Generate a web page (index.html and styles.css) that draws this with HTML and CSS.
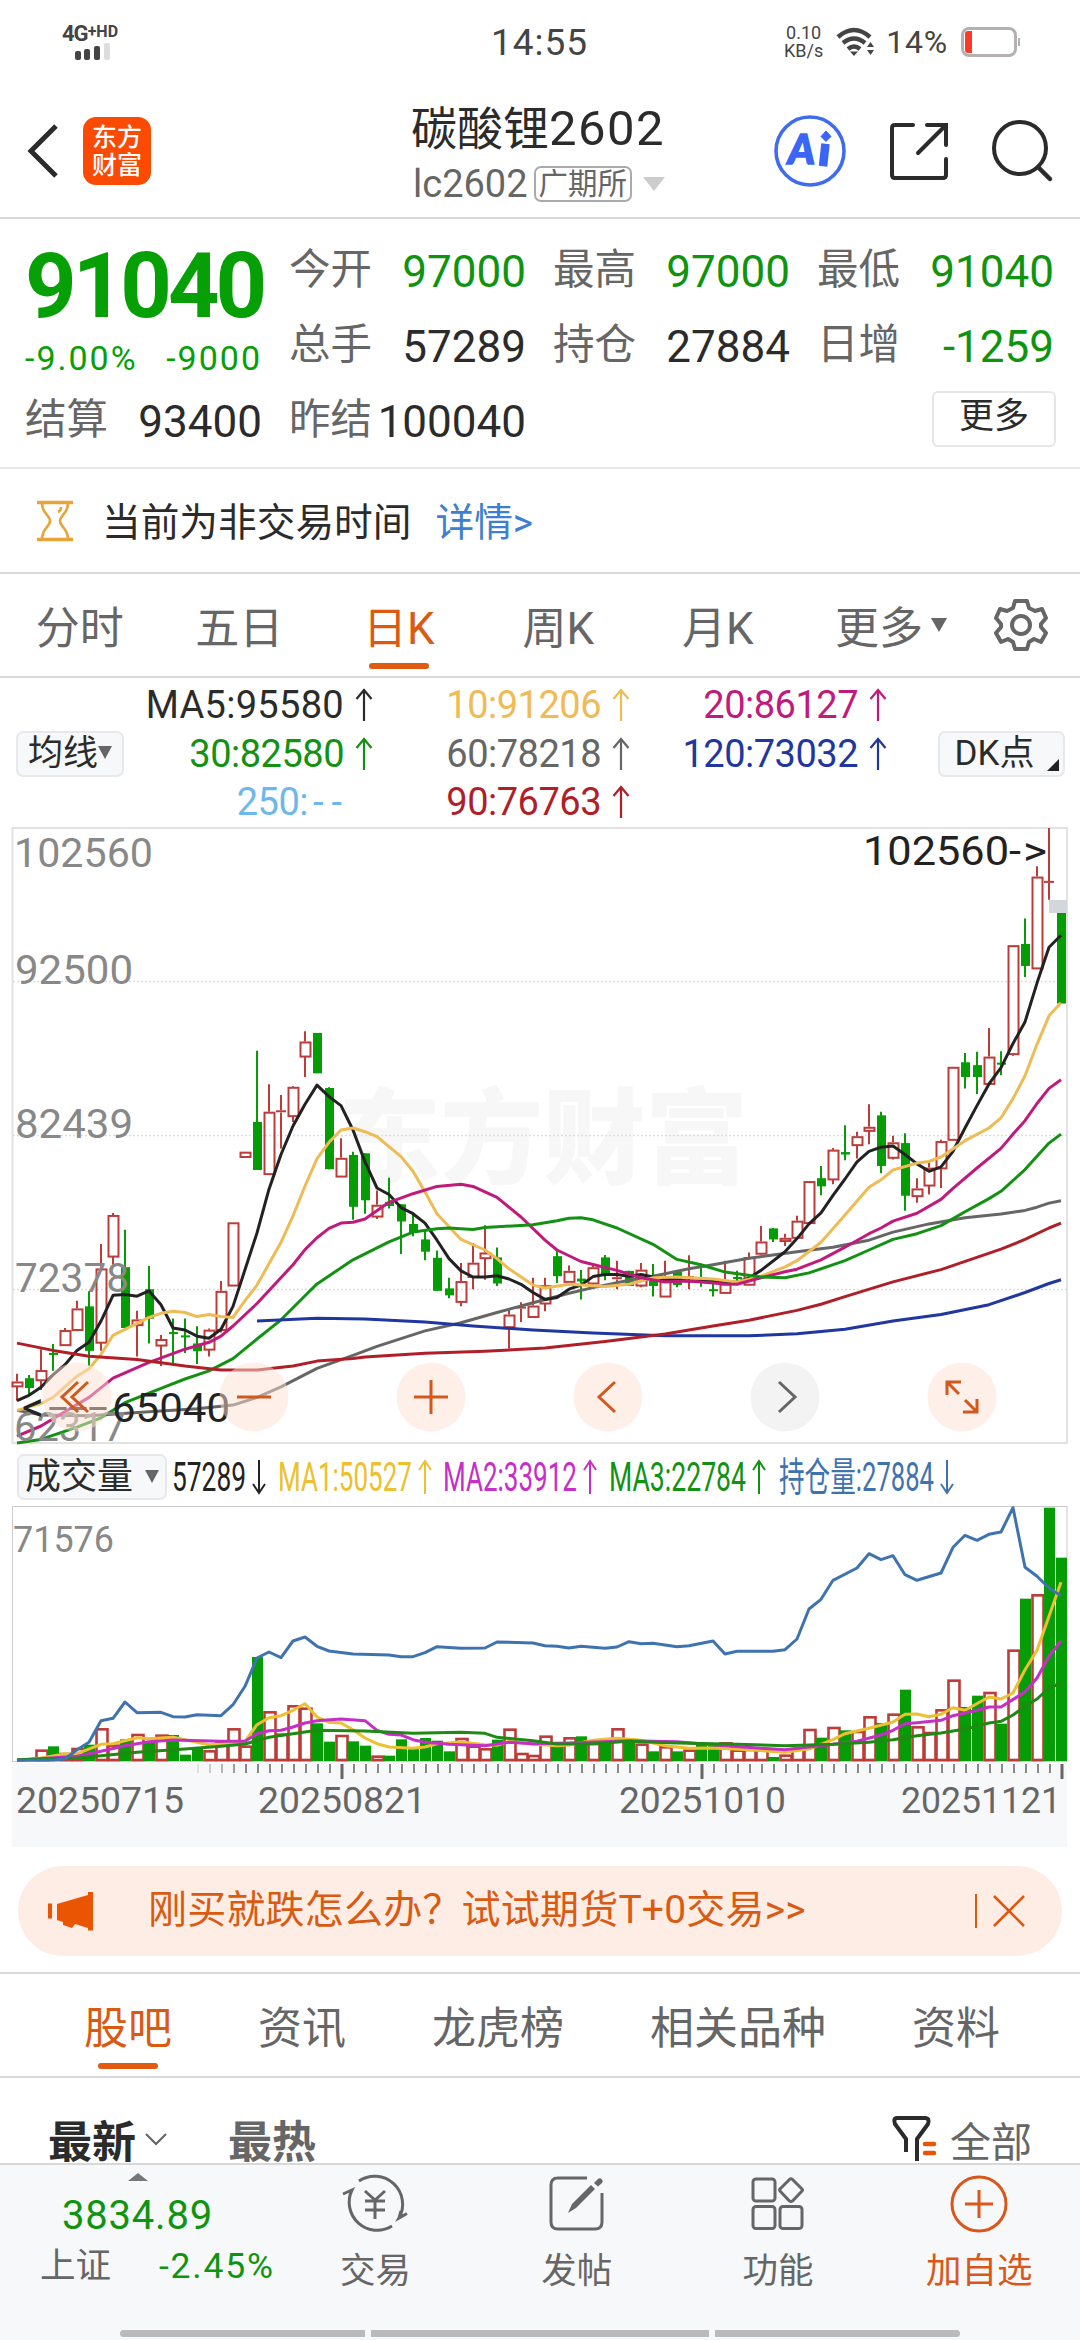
FILE: index.html
```html
<!DOCTYPE html>
<html lang="zh-CN">
<head>
    <meta charset="UTF-8">
    <meta name="viewport" content="width=device-width, initial-scale=1.0">
    <title>碳酸锂2602</title>
    <link rel="stylesheet" href="styles.css">
</head>
<body>

<svg class="defs">
    <symbol id="up" viewBox="0 0 18 34"><path d="M9 33V2M1.500 11L9 2l7.500 9" fill="none" stroke="currentColor" stroke-width="2.200"/></symbol>
</svg>

<div class="status">
    <div class="net">
        <div class="net-name">4G<sup>+HD</sup></div>
        <svg width="36" height="17" viewBox="0 0 36 17">
            <rect x="0" y="8" width="6" height="9" rx="2" fill="#444"/>
            <rect x="9" y="6" width="6" height="11" rx="2" fill="#444"/>
            <rect x="19" y="3" width="6" height="14" rx="2" fill="#444"/>
            <rect x="29" y="0" width="6" height="17" rx="2" fill="#ddd"/>
        </svg>
    </div>
    <div class="time">14:55</div>
    <div class="status-right">
        <div class="speed">0.10<br>KB/s</div>
        <svg width="40" height="30" viewBox="0 0 40 30">
            <g fill="none" stroke="#444" stroke-width="4.500">
                <path d="M2 10Q18 -4 34 10"/>
                <path d="M7 16Q18 7 29 16"/>
                <path d="M12 22Q18 17 24 22"/>
            </g>
            <path d="M14 24.500h8L18 29zM31 20l3.500-5 3.500 5zM31 23h7l-3.500 5z" fill="#444"/>
        </svg>
        <div class="percent">14%</div>
        <div class="battery"><i></i></div>
    </div>
</div>

<div class="header">
    <svg class="back" width="32" height="54" viewBox="0 0 32 54"><path d="M30 2L5 27l25 25" fill="none" stroke="#2b2b2b" stroke-width="5"/></svg>
    <div class="logo">东方<br>财富</div>
    <div class="title">
        <div class="name">碳酸锂<span>2602</span></div>
        <div class="code">lc2602<span class="market">广期所</span><i class="tri"></i></div>
    </div>
    <div class="tools">
        <svg width="72" height="72" viewBox="0 0 72 72">
            <circle cx="36" cy="36" r="34" fill="none" stroke="#3f6bee" stroke-width="3.600"/>
            <text x="14" y="49" class="ai">A</text>
            <path d="M51 33l-1.500 14" stroke="#3a66f5" stroke-width="8.500" stroke-linecap="square"/>
            <path d="M52 16l5 5.500l-5 5l-5-5z" fill="#3a66f5" stroke="#3a66f5"/>
        </svg>
        <svg width="60" height="60" viewBox="0 0 60 60"><path d="M24 4H6Q3 4 3 7V54Q3 57 6 57H54Q57 57 57 54V38M38 4H57V24M56 5L29 32" fill="none" stroke="#2b2b2b" stroke-width="4" stroke-linecap="round"/></svg>
        <svg width="60" height="62" viewBox="0 0 60 62"><circle cx="28" cy="28" r="26" fill="none" stroke="#2b2b2b" stroke-width="4"/><path d="M46 47l12 12" stroke="#2b2b2b" stroke-width="4.500" stroke-linecap="round"/></svg>
    </div>
</div>

<div class="quote">
    <div class="price">
        <div class="last">91040</div>
        <div class="change"><span>-9.00%</span><span>-9000</span></div>
    </div>
    <div class="cell"><label>今开</label><b class="green">97000</b></div>
    <div class="cell"><label>最高</label><b class="green">97000</b></div>
    <div class="cell"><label>最低</label><b class="green">91040</b></div>
    <div class="cell"><label>总手</label><b>57289</b></div>
    <div class="cell"><label>持仓</label><b>27884</b></div>
    <div class="cell"><label>日增</label><b class="green">-1259</b></div>
    <div class="cell"><label>结算</label><b>93400</b></div>
    <div class="cell"><label>昨结</label><b>100040</b></div>
    <button class="more">更多</button>
</div>

<div class="notice">
    <svg width="36" height="42" viewBox="0 0 36 42">
        <path d="M0 2.500H36M0 39.500H36" stroke="#e8a33a" stroke-width="3.500"/>
        <path d="M5 3C5 14 13 15 13 21S5 28 5 39M31 3C31 14 23 15 23 21S31 28 31 39M24 7q0 4-3 5" fill="none" stroke="#e8a33a" stroke-width="2.600"/>
    </svg>
    <span>当前为非交易时间</span>
    <a>详情&gt;</a>
</div>

<div class="tabs">
    <div>分时</div>
    <div>五日</div>
    <div class="active">日K</div>
    <div>周K</div>
    <div>月K</div>
    <div class="tab-more">更多<i class="tri"></i></div>
    <svg width="72" height="54" viewBox="-36 -27 72 54">
        <g fill="none" stroke="#666" stroke-width="4" stroke-linejoin="round">
            <path d="M-6 -24H6L8 -17L14 -14L21 -16L25 -7L20 -1V2L25 8L20 17L13 14L8 17L6 24H-6L-8 17L-13 14L-20 17L-25 8L-20 2V-1L-25 -7L-21 -16L-14 -14L-8 -17Z"/>
            <circle r="9"/>
        </g>
    </svg>
</div>

<div class="ma">
    <button class="chip">均线<i class="tri"></i></button>
    <div class="ma-list">
        <div class="c5">MA5:95580<svg><use href="#up"/></svg></div>
        <div class="c10">10:91206<svg><use href="#up"/></svg></div>
        <div class="c20">20:86127<svg><use href="#up"/></svg></div>
        <div class="c30">30:82580<svg><use href="#up"/></svg></div>
        <div class="c60">60:78218<svg><use href="#up"/></svg></div>
        <div class="c120">120:73032<svg><use href="#up"/></svg></div>
        <div class="c250">250:<span>--</span><svg></svg></div>
        <div class="c90">90:76763<svg><use href="#up"/></svg></div>
    </div>
    <button class="chip dk">DK点<i></i></button>
</div>

<div class="kline">
    <svg id="kline" width="1080" height="620"></svg>
    <div class="controls">
        <svg viewBox="0 0 70 70"><circle cx="35" cy="35" r="34.500"/><path d="M36 20L20 35l16 15M46 20L30 35l16 15"/></svg>
        <svg viewBox="0 0 70 70"><circle cx="35" cy="35" r="34.500"/><path d="M18 35H52"/></svg>
        <svg viewBox="0 0 70 70"><circle cx="35" cy="35" r="34.500"/><path d="M18 35H52M35 18V52"/></svg>
        <svg viewBox="0 0 70 70"><circle cx="35" cy="35" r="34.500"/><path d="M42 20L26 35l16 15"/></svg>
        <svg viewBox="0 0 70 70" class="off"><circle cx="35" cy="35" r="34.500"/><path d="M29 20L45 35L29 50"/></svg>
        <svg viewBox="0 0 70 70"><circle cx="35" cy="35" r="34.500"/><path d="M20 33V20H34M20 20L32 32M50 37V50H36M50 50L38 38"/></svg>
    </div>
</div>

<div class="vol-head">
    <button class="chip">成交量<i class="tri"></i></button>
    <svg id="volLegend" width="900" height="46"></svg>
</div>

<div class="volume">
    <svg id="volume" width="1080" height="342"></svg>
</div>

<div class="banner">
    <svg width="46" height="40" viewBox="0 0 46 40"><path d="M0 12.500h4v15H0zM9 13L40 4V1H45V39.500H40V37L27 33L24 37L15 34V31L9 29z" fill="#ea5504"/></svg>
    <span>刚买就跌怎么办？试试期货T+0交易&gt;&gt;</span>
    <svg class="close" width="34" height="34" viewBox="0 0 34 34"><path d="M2 2L32 32M32 2L2 32" stroke="#e0560f" stroke-width="2.600"/></svg>
</div>

<div class="tabs2">
    <div class="active">股吧</div>
    <div>资讯</div>
    <div>龙虎榜</div>
    <div>相关品种</div>
    <div>资料</div>
</div>

<div class="sort">
    <b>最新</b>
    <svg width="22" height="14" viewBox="0 0 22 14"><path d="M1 2l10 10L21 2" fill="none" stroke="#666" stroke-width="2.200"/></svg>
    <b class="hot">最热</b>
    <div class="filter">
        <svg width="44" height="48" viewBox="0 0 44 48">
            <path d="M14 37V24L3 9Q1 3 5 3H33Q38 3 36 9L25 24V46" fill="none" stroke="#2b2b2b" stroke-width="4"/>
            <path d="M33 29h9M33 38h9" stroke="#ea5504" stroke-width="4.500" stroke-linecap="round"/>
        </svg>
        全部
    </div>
</div>

<div class="bottom">
    <div class="index">
        <i class="tri"></i>
        <div class="index-val">3834.89</div>
        <div class="index-row"><span>上证</span><span class="green">-2.45%</span></div>
    </div>
    <div class="nav">
        <svg viewBox="-34 -30 68 60">
            <path d="M-16 -23A28 28 0 0 1 24 14L32 9.500M24 14L26 7M17 22A28 28 0 0 1 -23 -14L-32 -10"/>
            <path d="M-10 -13L0 -4L10 -13M0 -4V15M-10 -3H10M-10 6H10"/>
        </svg>
        交易
    </div>
    <div class="nav">
        <svg viewBox="-34 -30 68 60">
            <path d="M10 -26H-19Q-26 -26 -26 -19V18Q-26 25 -19 25H18Q25 25 25 18V-11"/>
            <path class="solid" d="M-9 9L-5 0L14 -19L18 -15L-1 4ZM17 -21L21 -25Q23 -26.500 25 -24.500Q26.500 -22.500 25 -21L21 -17.500Z"/>
        </svg>
        发帖
    </div>
    <div class="nav">
        <svg viewBox="-34 -30 68 60">
            <rect x="-25" y="-25" width="22" height="22" rx="3"/>
            <rect x="-25" y="2.500" width="22" height="22" rx="3"/>
            <rect x="2" y="2.500" width="22" height="22" rx="3"/>
            <path d="M11.500 -24.500Q13 -26 14.500 -24.500L24 -15Q25 -14 24 -13L14.500 -3Q13 -2 11.500 -3L2 -13Q1 -14 2 -15Z"/>
        </svg>
        功能
    </div>
    <div class="nav add">
        <svg viewBox="-34 -30 68 60"><circle r="27"/><path d="M-14 0H14M0 -14V14"/></svg>
        加自选
    </div>
</div>
<div class="home"><i></i><i></i><i></i></div>

<script src="chart.js"></script>
</body>
</html>
```
FILE: styles.css
```css
* {
    box-sizing: border-box;
}
body {
    margin: 0;
    width: 1080px;
    height: 2340px;
    overflow: hidden;
    background: #fff;
    color: #2b2b2b;
    font-family: Roboto, "Noto Sans CJK SC", sans-serif;
}
svg {
    display: block;
    flex: none;
    overflow: visible;
}
button {
    font-family: inherit;
    color: inherit;
    padding: 0;
}
.defs {
    position: absolute;
    width: 0;
    height: 0;
}
.green {
    color: #0f9410;
}
.tri {
    display: inline-block;
    border: 8px solid transparent;
    border-top: 14px solid #666;
    border-bottom: 0;
}

/* status bar */
.status {
    display: flex;
    align-items: center;
    height: 84px;
    padding: 0 63px 0 62px;
    color: #444;
}
.net {
    width: 429px;
}
.net-name {
    font-size: 22px;
    line-height: 18px;
    font-weight: bold;
    letter-spacing: -1px;
}
.net-name sup {
    font-size: 16px;
    line-height: 1px;
    vertical-align: 4px;
    letter-spacing: 0;
}
.net svg {
    margin-left: 13px;
}
.time {
    font-size: 37px;
    letter-spacing: 1px;
}
.status-right {
    display: flex;
    align-items: center;
    margin-left: auto;
}
.speed {
    font-size: 18px;
    line-height: 18px;
    text-align: center;
    margin-right: 13px;
}
.percent {
    font-size: 32px;
    letter-spacing: 0.800px;
    margin: 0 13px 0 10px;
}
.battery {
    position: relative;
    width: 56px;
    height: 30px;
    border: 3px solid #b5b1b0;
    border-radius: 8px;
    padding: 1px;
}
.battery i {
    display: block;
    width: 7px;
    height: 22px;
    border-radius: 3px 0 0 3px;
    background: #fa3a2a;
}
.battery::after {
    content: "";
    position: absolute;
    right: -6px;
    top: 8px;
    width: 2px;
    height: 8px;
    background: #b5b1b0;
}

/* header */
.header {
    display: flex;
    align-items: center;
    height: 135px;
    padding: 0 28px 0 26px;
    border-bottom: 2px solid #d8d8d8;
}
.logo {
    width: 68px;
    height: 68px;
    margin-left: 25px;
    padding-top: 7px;
    border-radius: 13px;
    background: #fb4a03;
    color: #fff;
    font-size: 25px;
    line-height: 28px;
    font-weight: 500;
    text-align: center;
}
.title {
    margin-left: 260px;
    padding-top: 12px;
}
.name {
    font-size: 46px;
    line-height: 54px;
}
.name span {
    font-size: 49px;
    letter-spacing: 1.500px;
}
.code {
    display: flex;
    align-items: center;
    height: 56px;
    margin-left: 2px;
    font-size: 38px;
    color: #666;
}
.market {
    margin: 0 11px 0 6px;
    padding: 0 3px;
    border: 2px solid #aaa;
    border-radius: 7px;
    font-size: 29.500px;
    line-height: 32px;
}
.code .tri {
    border-width: 14px 11px 0;
    border-top-color: #ccc;
}
.tools {
    display: flex;
    align-items: center;
    gap: 43px;
    margin-left: auto;
}
.ai {
    font: italic 900 41px Lato, sans-serif;
    fill: #3a66f5;
    stroke: #3a66f5;
    stroke-width: 1.500px;
}

/* quote */
.quote {
    display: grid;
    grid-template-columns: repeat(4, 237px);
    grid-template-rows: repeat(3, 75px);
    column-gap: 27px;
    height: 250px;
    padding: 15px 0 0 25px;
    border-bottom: 2px solid #e8e8e8;
}
.price {
    grid-row: span 2;
    color: #06a006;
}
.last {
    font-size: 90px;
    line-height: 105px;
    font-weight: bold;
    letter-spacing: -4px;
}
.change {
    display: flex;
    justify-content: space-between;
    font-size: 34px;
    line-height: 38px;
}
.change span {
    letter-spacing: 2px;
}
.cell {
    display: flex;
    justify-content: space-between;
    align-items: center;
    font-size: 44px;
}
.cell label {
    font-size: 41.500px;
    line-height: 50px;
    margin-top: -4px;
    color: #666;
}
.cell b {
    font-weight: normal;
}
.more {
    grid-column: 4;
    justify-self: end;
    align-self: center;
    width: 124px;
    height: 56px;
    border: 2px solid #e6e6e6;
    border-radius: 6px;
    background: #fff;
    font-size: 35px;
    line-height: 46px;
    padding-bottom: 4px;
    margin: -6px -2px 0 0;
}

/* notice */
.notice {
    display: flex;
    align-items: center;
    height: 105px;
    padding-left: 37px;
    border-bottom: 2px solid #d8d8d8;
    font-size: 38.700px;
}
.notice span {
    margin: -3px 24px 0 29px;
}
.notice a {
    margin-top: -3px;
    color: #3d80cf;
}

/* period tabs */
.tabs {
    display: flex;
    align-items: center;
    height: 104px;
    border-bottom: 2px solid #d8d8d8;
    font-size: 44px;
    color: #666;
}
.tabs div {
    position: relative;
    width: 159.500px;
    text-align: center;
}
.tabs .tab-more {
    width: 187px;
}
.tab-more .tri {
    margin-left: 8px;
    vertical-align: 12px;
}
.tabs .active, .tabs2 .active {
    color: #da5a12;
}
.active::after {
    content: "";
    position: absolute;
    left: 50%;
    bottom: -12px;
    width: 60px;
    height: 6px;
    margin-left: -30px;
    border-radius: 3px;
    background: #e05a12;
}

/* moving averages */
.chip {
    position: relative;
    height: 46px;
    border: 2px solid #e6e8ec;
    border-radius: 7px;
    background: #f7f8fa;
    font-size: 35px;
    line-height: 40px;
    white-space: nowrap;
}
.chip .tri {
    border-width: 13px 7px 0;
    vertical-align: 6px;
}
.ma {
    display: flex;
    align-items: center;
    height: 149px;
    padding: 2px 0 0 16px;
}
.ma .chip {
    width: 108px;
}
.ma .dk {
    width: 127px;
    margin-left: 51px;
    padding-right: 14px;
}
.dk i {
    position: absolute;
    right: 4px;
    bottom: 4px;
    border-left: 12px solid transparent;
    border-bottom: 12px solid #222;
}
.ma-list {
    display: grid;
    grid-template-columns: repeat(3, 229px);
    grid-auto-rows: 48.500px;
    column-gap: 28px;
    margin-left: 20px;
    font-size: 38px;
}
.ma-list div {
    display: flex;
    justify-content: flex-end;
    align-items: center;
    letter-spacing: -0.500px;
}
.ma-list .c5 {
    letter-spacing: 0.300px;
}
.ma-list svg {
    width: 18px;
    height: 34px;
    margin-left: 11px;
}
.c10 { color: #efbb55; }
.c20 { color: #c01a7c; }
.c30 { color: #129112; }
.c60 { color: #666; }
.c90 { color: #b01f28; }
.c120 { color: #1f379f; }
.c250 { color: #6cb8ea; }
.c250 span {
    letter-spacing: 8px;
    margin: 0 -6px 0 5px;
}

/* charts */
.kline {
    position: relative;
    height: 620px;
}
.controls {
    position: absolute;
    left: 42px;
    top: 535px;
    display: flex;
    gap: 107px;
}
.controls svg {
    width: 70px;
    height: 70px;
    fill: none;
    stroke: #d2581c;
    stroke-width: 3;
}
.controls circle {
    fill: rgba(254, 225, 210, 0.500);
    stroke: none;
}
.controls .off {
    stroke: #666;
}
.controls .off circle {
    fill: #f3f3f3;
}
.kline text, .volume text {
    font-size: 41px;
    fill: #888;
}
.kline .mark {
    font-size: 40px;
    fill: #222;
}
.kline .watermark {
    font-size: 104px;
    font-weight: 900;
    fill: #f7f7f7;
}
.vol-head {
    display: flex;
    align-items: center;
    height: 58px;
    padding: 1px 0 0 17px;
}
.vol-head .chip {
    width: 150px;
    font-size: 36px;
}
.vol-head .tri {
    margin-left: 12px;
}
#volLegend {
    font-size: 40px;
}
.volume {
    height: 342px;
}
.volume text {
    font-size: 37px;
}
.volume .date {
    fill: #666;
}

/* banner */
.banner {
    display: flex;
    align-items: center;
    height: 90px;
    margin: 19px 18px 16px;
    padding: 0 36px 0 30px;
    border-radius: 45px;
    background: #fdede4;
    color: #da5a12;
    font-size: 39px;
    line-height: 50px;
}
.banner span {
    margin: -3px 0 0 54px;
    letter-spacing: 0.200px;
}
.banner .close {
    box-sizing: content-box;
    margin-left: auto;
    padding-left: 15px;
    border-left: 2px solid #da5a12;
}

.tabs2 {
    display: flex;
    align-items: center;
    gap: 86px;
    height: 106px;
    padding-left: 84px;
    border-top: 2px solid #d8d8d8;
    border-bottom: 2px solid #d8d8d8;
    font-size: 44px;
    color: #666;
}
.tabs2 div {
    position: relative;
}

.sort {
    display: flex;
    align-items: center;
    height: 87px;
    padding: 36px 48px 0 48px;
    border-bottom: 2px solid #d8d8d8;
    font-size: 44px;
}
.sort > svg {
    margin-left: 9px;
}
.sort .hot {
    margin-left: 61px;
    color: #666;
}
.filter {
    display: flex;
    align-items: center;
    margin-left: auto;
    font-size: 41px;
    color: #666;
}
.filter svg {
    margin-right: 14px;
}

/* bottom bar */
.bottom {
    display: flex;
    height: 165px;
    background: #f7f8fa;
    color: #666;
    font-size: 35.500px;
}
.index {
    position: relative;
    width: 275px;
    padding: 26px 0 0 40px;
}
.index .tri {
    position: absolute;
    left: 128px;
    top: 8px;
    border: 10px solid transparent;
    border-top: 0;
    border-bottom: 8px solid #777;
}
.index-val {
    padding-left: 22px;
    font-size: 40px;
    line-height: 50px;
    letter-spacing: 0.800px;
    color: #0f9410;
}
.index-row {
    display: flex;
    justify-content: space-between;
    align-items: center;
    line-height: 50px;
}
.index-row .green {
    letter-spacing: 1.800px;
}
.nav {
    width: 201.500px;
    padding-top: 9px;
    line-height: 74px;
    text-align: center;
}
.nav svg {
    width: 68px;
    height: 60px;
    margin: 0 auto;
    fill: none;
    stroke: #666;
    stroke-width: 3;
}
.nav .solid {
    fill: #666;
    stroke: none;
}
.nav.add {
    color: #d9571a;
}
.add svg {
    stroke: #d9571a;
}
.home {
    display: flex;
    justify-content: center;
    gap: 6px;
    height: 12px;
    background: #f7f8fa;
}
.home i {
    width: 245px;
    height: 7px;
    background: #bababc;
}
.home i:nth-child(2) {
    width: 338px;
}
.home i:first-child {
    border-radius: 4px 0 0 4px;
}
.home i:last-child {
    border-radius: 0 4px 4px 0;
}
```
FILE: chart.js
```js
// [up(1)/down(0), high, body top, body bottom, low]
const candles = [
    [1,1357,1376,1388,1423],[0,1360,1368,1392,1408],[1,1297,1348,1373,1397],[0,1284,1306,1311,1350],
    [1,1245,1250,1287,1287],[1,1178,1197,1250,1253],[0,1155,1192,1301,1338],[1,1039,1099,1281,1301],
    [1,963,968,1070,1090],[0,1004,1096,1245,1245],[1,1203,1224,1238,1315],[0,1093,1150,1222,1283],
    [1,1262,1272,1288,1338],[0,1222,1255,1259,1332],[0,1222,1263,1268,1306],[0,1241,1283,1302,1333],
    [1,1246,1249,1298,1315],[1,1130,1154,1250,1256],[1,986,986,1141,1141],[1,813,813,826,826],
    [0,566,740,858,858],[1,648,715,868,868],[1,674,711,717,805],[1,652,654,726,740],
    [1,518,543,580,630],[0,522,522,621,621],[0,655,657,856,856],[1,780,828,874,874],
    [0,813,821,948,980],[0,817,817,932,965],[1,908,943,972,978],[0,877,936,946,952],
    [0,942,942,984,1064],[0,965,990,1012,1020],[0,1003,1028,1058,1079],[0,1055,1073,1154,1154],
    [0,1122,1148,1165,1172],[1,1086,1130,1181,1192],[1,1037,1085,1120,1150],[1,993,1060,1074,1127],
    [0,1048,1072,1136,1142],[1,1197,1212,1243,1295],[1,1182,1193,1197,1230],[1,1122,1190,1218,1218],
    [1,1122,1140,1185,1204],[0,1055,1069,1118,1135],[1,1092,1105,1132,1132],[0,1103,1124,1131,1175],
    [1,1090,1096,1136,1140],[0,1066,1072,1115,1128],[1,1080,1120,1126,1150],[0,1105,1105,1142,1142],
    [1,1086,1102,1141,1145],[0,1088,1130,1142,1168],[1,1080,1125,1168,1168],[0,1105,1107,1140,1145],
    [1,1067,1118,1122,1150],[0,1098,1120,1124,1144],[0,1130,1150,1154,1168],[1,1080,1136,1159,1159],
    [0,1105,1120,1124,1140],[1,1060,1071,1139,1139],[1,995,1033,1063,1065],[0,1000,1001,1028,1034],
    [1,1014,1024,1032,1044],[1,970,982,1024,1026],[1,885,885,988,990],[0,848,878,898,920],
    [1,804,808,881,893],[0,748,814,820,834],[1,764,775,797,830],[1,697,752,762,795],
    [0,715,724,848,866],[1,774,790,828,832],[0,768,792,921,958],[1,878,903,922,938],
    [1,840,852,896,918],[1,784,787,854,902],[1,605,605,784,784],[0,571,594,630,658],
    [0,568,601,630,672],[1,510,580,647,648],[0,567,595,599,626],[1,307,307,574,578],
    [0,242,304,358,385],[1,114,139,364,365],[1,20,150,154,196],[0,228,228,450,450]
];

// index,value pairs
const maLines = {
    '#666': '0,1447 2,1458 6,1460 11,1450 15,1443 18,1434 20,1415 22,1389 25,1344 28,1312 30,1290 34,1252 37,1232 40,1207 43,1183 46,1160 48,1146 51,1128 53,1118 56,1100 58,1090 61,1074 65,1058 68,1047 71,1030 73,1010 76,990 79,975 82,966 84,957 85,949 86,939 87,933',
    '#222': '0,1423 1,1410 2,1390 3,1360 4,1335 5,1300 6,1280 7,1228 8,1165 9,1163 10,1167 11,1154 12,1188 13,1245 14,1250 15,1265 16,1270 17,1248 18,1192 20,1012 21,905 22,820 23,750 24,697 25,650 26,678 27,700 28,760 29,838 30,902 31,918 32,950 33,965 34,988 35,1030 36,1075 37,1105 38,1120 39,1120 40,1117 41,1125 42,1138 43,1158 44,1175 45,1170 46,1150 47,1140 48,1119 49,1114 50,1114 51,1118 52,1114 53,1120 54,1125 56,1130 58,1130 60,1133 61,1122 62,1104 64,1058 65,1026 66,990 67,963 68,920 69,880 70,838 71,812 72,802 73,799 74,820 75,843 76,861 77,850 78,812 79,755 80,700 81,647 82,607 83,548 84,495 85,400 86,312 87,283',
    '#efbb55': '0,1447 2,1430 3,1415 5,1363 6,1345 7,1310 8,1263 11,1219 12,1209 13,1204 14,1207 15,1217 16,1212 17,1217 18,1219 19,1178 20,1140 22,1035 23,970 24,897 25,830 26,790 27,760 28,755 29,764 30,776 32,825 33,861 34,912 35,965 37,1028 39,1054 40,1075 41,1100 43,1140 44,1147 46,1138 49,1143 51,1138 53,1122 55,1120 58,1125 60,1132 62,1118 64,1095 65,1080 67,1035 69,968 71,900 72,882 73,858 75,841 76,837 77,826 79,786 81,755 82,730 83,683 84,627 85,550 86,480 87,448',
    '#c01a7c': '0,1510 2,1485 6,1415 8,1368 11,1329 14,1297 16,1280 17,1265 18,1240 20,1185 23,1090 24,1053 25,1024 26,1001 27,988 28,986 29,978 31,937 33,916 35,898 37,893 38,898 40,925 42,973 44,1030 45,1054 47,1082 50,1104 52,1122 54,1132 56,1130 59,1137 60,1138 62,1122 64,1107 65,1101 67,1078 69,1047 71,1014 72,1000 73,983 75,964 77,930 78,903 80,853 82,805 83,770 84,737 85,695 86,658 87,637',
    '#129112': '0,1527 2,1518 5,1488 7,1465 9,1428 12,1393 14,1370 16,1350 18,1320 20,1272 22,1225 24,1166 25,1137 28,1078 31,1034 33,1010 35,1002 36,1000 38,1004 39,999 43,992 45,982 46,976 47,975 48,980 50,1000 53,1040 55,1077 57,1090 59,1108 62,1120 64,1122 66,1110 69,1080 71,1054 73,1028 75,1014 77,994 79,960 81,928 82,910 84,857 86,792 87,770',
    '#1f379f': '20,1228 25,1221 29,1223 34,1230 38,1240 43,1250 48,1257 54,1264 61,1264 65,1259 69,1248 73,1228 77,1212 81,1188 84,1158 86,1136 87,1127',
    '#b01f28': '0,1282 3,1300 6,1314 10,1322 14,1338 17,1348 20,1348 23,1338 25,1326 28,1320 29,1316 34,1307 39,1302 44,1294 49,1278 54,1260 58,1240 61,1226 65,1202 67,1187 69,1168 73,1132 77,1102 82,1052 84,1028 86,1000 87,988'
};

const volumes = [
    962,961,930,920,940,925,915,866,915,899,883,905,885,886,945,925,932,903,866,918,652,815,
    882,797,804,851,906,886,905,918,948,948,899,925,895,903,935,895,918,926,900,867,940,946,
    888,912,893,890,910,912,866,905,912,935,920,935,930,915,918,908,930,928,930,952,945,925,
    868,894,862,872,874,830,850,822,750,860,877,809,720,802,768,757,852,630,477,464,204,354
];

const volLines = {
    '#ecc02e': '0,962 2,955 4,943 5,942 7,914 8,912 10,894 11,897 13,893 14,900 16,915 17,913 19,905 20,855 21,834 22,828 23,812 24,792 25,832 26,848 27,850 28,870 29,895 30,912 31,922 33,926 34,922 35,912 37,907 39,915 40,917 41,905 43,914 45,918 46,916 48,902 50,896 52,902 54,918 56,926 58,925 61,930 64,938 66,928 68,900 69,882 71,866 73,847 74,824 75,823 76,831 77,824 78,804 79,812 81,772 82,778 83,760 84,690 85,632 86,530 87,428',
    '#c42fc8': '0,962 5,950 7,935 9,918 11,906 13,901 17,905 19,905 20,882 21,873 22,872 23,862 24,850 25,843 27,838 29,843 30,872 31,884 32,886 33,900 34,908 36,914 39,918 41,908 43,912 46,910 51,903 55,906 59,918 62,926 64,930 66,922 68,914 70,905 72,886 73,872 74,852 75,849 77,842 78,828 80,812 81,802 82,802 84,757 85,715 86,650 87,604',
    '#1e8a14': '0,960 5,955 7,948 10,938 14,928 17,920 19,913 21,893 23,882 25,872 29,874 33,881 37,878 39,881 40,893 43,903 45,913 48,912 51,905 55,910 60,914 64,918 68,914 71,908 73,900 75,888 77,880 79,868 81,850 82,845 83,826 84,800 85,778 86,745 87,730',
    '#3f73b0': '0,962 3,961 4,958 5,930 6,908 7,843 8,836 9,787 10,819 12,818 13,831 14,832 15,825 17,828 18,795 19,740 20,655 21,637 22,654 23,604 24,592 25,620 26,634 28,643 31,646 32,651 33,651 34,639 35,621 37,626 39,625 40,607 43,610 44,618 45,620 46,625 47,620 49,626 50,622 51,606 52,612 53,611 55,621 56,618 58,604 59,643 60,635 63,635 64,630 65,598 66,508 67,479 68,422 70,385 71,342 72,360 73,348 74,405 75,422 77,400 78,323 79,287 80,302 81,284 82,277 83,204 84,383 85,410 86,445 87,468'
};

const GREEN = '#059c05';
const RED = '#bd3b38';
const x = i => 17 + 12 * i;
const ky = v => (v - 20) / 2.45 + 1;
const vy = v => (v - 202) / 3 + 2;

function line(x1, y1, x2, y2, color, w, extra = '') {
    return `<path d="M${x1} ${y1}L${x2} ${y2}" stroke="${color}" stroke-width="${w}" ${extra}/>`;
}

function poly(data, fy, color) {
    const pts = data.split(' ').map(p => {
        const [i, v] = p.split(',').map(Number);
        return x(i) + ',' + fy(v).toFixed(1);
    });
    return `<polyline points="${pts.join(' ')}" fill="none" stroke="${color}" stroke-width="3" stroke-linejoin="round"/>`;
}

function text(tx, ty, str, w, cls = '') {
    return `<text x="${tx}" y="${ty}" textLength="${w}" lengthAdjust="spacingAndGlyphs" class="${cls}">${str}</text>`;
}

function drawKline() {
    let s = text(338, 349, '东方财富', 410, 'watermark');
    s += '<rect x="12.5" y="1" width="1054.500" height="615" fill="none" stroke="#e2e2e2" stroke-width="2"/>';
    [154.5, 308.5, 462.5].forEach(y => s += line(13, y, 1067, y, '#ddd', 1.5, 'stroke-dasharray="2 2"'));
    candles.forEach(([up, h, t, b, l], i) => {
        const cx = x(i), top = ky(t), bot = ky(b);
        if (up) {
            s += line(cx, ky(h), cx, top, RED, 2);
            s += line(cx, bot, cx, ky(l), RED, 2);
            s += bot - top < 3
                ? line(cx - 5, (top + bot) / 2, cx + 5, (top + bot) / 2, RED, 2)
                : `<rect x="${cx - 4.5}" y="${top + 1}" width="10" height="${bot - top - 1}" fill="none" stroke="${RED}" stroke-width="2"/>`;
        } else {
            s += line(cx, ky(h), cx, ky(l), GREEN, 2);
            s += `<rect x="${cx - 4}" y="${top}" width="9" height="${Math.max(bot - top, 2)}" fill="${GREEN}"/>`;
        }
    });
    s += '<rect x="1049" y="73" width="18" height="13" fill="#d3d6db"/>';
    for (const color in maLines) s += poly(maLines[color], ky, color);
    s += text(14, 40, '102560', 139) + text(15, 157, '92500', 118) + text(15, 311, '82439', 118);
    s += text(15, 465, '72378', 114) + text(14, 614, '62317', 112);
    s += text(863, 38, '102560-', 158, 'mark') + text(1023, 38, '&gt;', 24, 'mark');
    s += text(22, 594, '&lt;', 22, 'mark') + text(48, 594, '---', 60, 'mark') + text(112, 595, '65040', 118, 'mark');
    document.getElementById('kline').innerHTML = s;
}

function drawLegend() {
    const items = [
        [5, 74, '57289', '#222', 0], [111, 134, 'MA1:50527', '#ecc02e', 1],
        [276, 134, 'MA2:33912', '#c42fc8', 1], [442, 137, 'MA3:22784', '#129112', 1],
        [612, 155, '持仓量:27884', '#3f73b0', 0]
    ];
    document.getElementById('volLegend').innerHTML = items.map(([tx, w, str, color, up]) => {
        const ax = tx + w + 13;
        const arrow = up ? `M${ax} 40V7M${ax - 6} 16L${ax} 7l6 9` : `M${ax} 6V39M${ax - 6} 30L${ax} 39l6 -9`;
        return `<g fill="${color}">${text(tx, 37, str, w)}</g><path d="${arrow}" fill="none" stroke="${color}" stroke-width="2"/>`;
    }).join('');
}

function drawVolume() {
    let s = '<rect x="12" y="258" width="1055" height="84" fill="#f7f8fa"/>';
    s += '<rect x="12.5" y="1.5" width="1054.500" height="255" fill="none" stroke="#ccc"/>';
    s += text(13, 47, '71576', 101);
    volumes.forEach((v, i) => {
        const green = i === 86 || (!candles[i][0] && i !== 60);
        const y = vy(v), h = 256 - y;
        s += green
            ? `<rect x="${x(i) - 5}" y="${y}" width="11" height="${h}" fill="${GREEN}"/>`
            : `<rect x="${x(i) - 4.5}" y="${y + 1}" width="11" height="${Math.max(h - 2, 0)}" fill="#fff" stroke="${RED}" stroke-width="2.6"/>`;
    });
    for (const color in volLines) s += poly(volLines[color], vy, color);
    for (let i = 15; i < 88; i++) {
        const major = i === 27 || i === 57 || i === 87;
        const o = Math.min((i - 14) / 5, 1);
        s += line(x(i) + 1, 259, x(i) + 1, major ? 274 : 268, major ? '#666' : '#888', major ? 3 : 2, `opacity="${o}"`);
    }
    s += text(16, 308, '20250715', 168, 'date') + text(258, 308, '20250821', 168, 'date');
    s += text(619, 308, '20251010', 167, 'date') + text(901, 308, '20251121', 160, 'date');
    document.getElementById('volume').innerHTML = s;
}

drawKline();
drawLegend();
drawVolume();
```
